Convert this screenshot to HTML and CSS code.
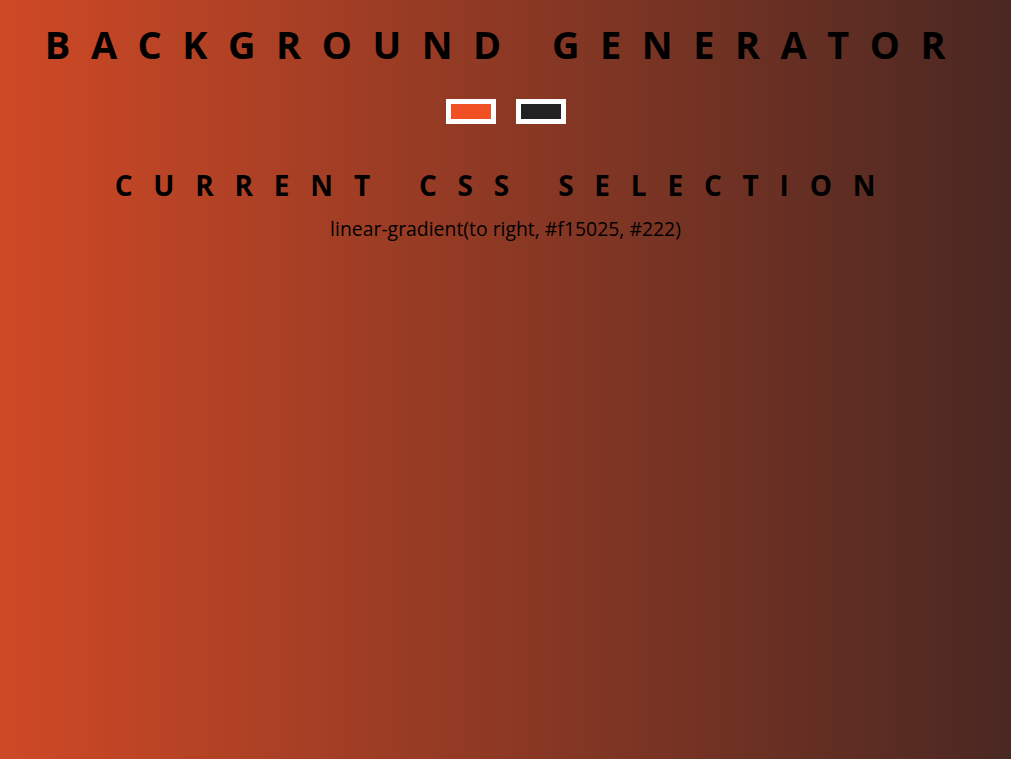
FILE: index.html
```html
<!DOCTYPE html>
<html lang="en">
<head>
<meta charset="utf-8">
<title>Background Generator</title>
<link rel="stylesheet" href="styles.css">
</head>
<body class="page">
  <h1 class="title">BACKGROUND GENERATOR</h1>
  <div class="pickers">
    <input class="picker" type="color" value="#f15025" name="color1">
    <input class="picker" type="color" value="#222222" name="color2">
  </div>
  <h3 class="subtitle">CURRENT CSS SELECTION</h3>
  <p class="css-output">linear-gradient(to right, #f15025, #222)</p>
</body>
</html>
```

FILE: styles.css
```css
html, body {
  margin: 0;
  padding: 0;
}

.page {
  min-height: 100vh;
  background: linear-gradient(to right, #cf4926, #4a2822);
  font-family: "Open Sans", "Noto Sans", sans-serif;
  color: #000;
  display: flex;
  flex-direction: column;
  align-items: center;
  text-align: center;
}

.title {
  margin: 20px 0 0;
  font-size: 38px;
  line-height: 48px;
  font-weight: 700;
  letter-spacing: 20.5px;
}

.pickers {
  margin-top: 31px;
  display: flex;
  gap: 20px;
}

.picker {
  -webkit-appearance: none;
  appearance: none;
  width: 50px;
  height: 25px;
  box-sizing: border-box;
  border: 5px solid #fff;
  padding: 0;
  margin: 0;
  background: #fff;
  display: block;
}

.picker::-webkit-color-swatch-wrapper {
  padding: 0;
}

.picker::-webkit-color-swatch {
  border: none;
  border-radius: 0;
}

.subtitle {
  margin: 44px 0 0;
  font-size: 28px;
  line-height: 34px;
  font-weight: 700;
  letter-spacing: 20.8px;
}

.css-output {
  margin: 14px 0 0;
  font-size: 19.4px;
  line-height: 26px;
}
```
